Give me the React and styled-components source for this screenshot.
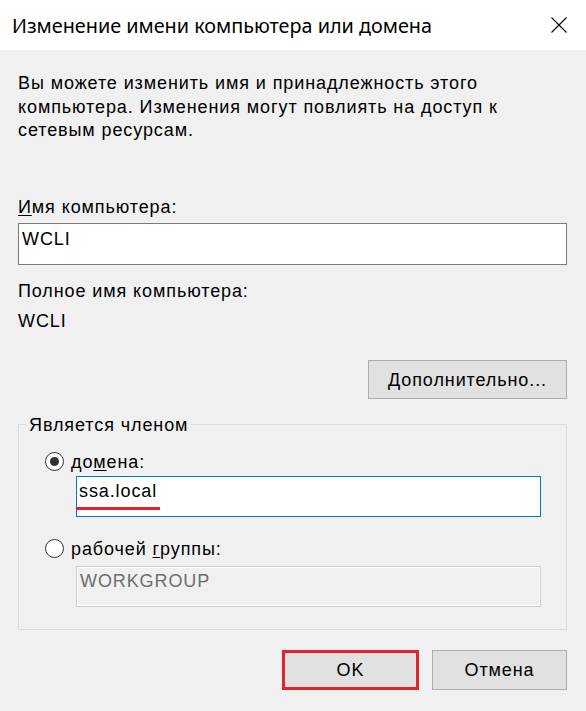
import styled, { createGlobalStyle } from "styled-components"

const GlobalStyle = createGlobalStyle`
    html, body {
        margin: 0;
        padding: 0;
        background: #f0f0f0;
    }
    body {
        font-family: "Liberation Sans", Arial, sans-serif;
        font-size: 18px;
        letter-spacing: 0.9px;
        color: #000;
    }
`

const Dialog = styled.div`
    width: 586px;
    height: 711px;
    background: #f0f0f0;
    display: flex;
    flex-direction: column;
`

const TitleBar = styled.div`
    height: 50px;
    background: #fff;
    display: flex;
    align-items: center;
    justify-content: space-between;
    padding: 0 19px 0 12px;
`

const Title = styled.div`
    font-family: "Noto Sans", "Open Sans", sans-serif;
    font-size: 19.8px;
    letter-spacing: 0;
    color: #000;
`

const Body = styled.div`
    padding: 22px 19px 0 18px;
    display: flex;
    flex-direction: column;
`

const Intro = styled.p`
    margin: 0;
    line-height: 23.5px;
`

const Label = styled.div`
    line-height: 20px;
    margin-top: ${(p) => p.$gap || 0}px;
`

const Key = styled.span`
    text-decoration: underline;
    text-underline-offset: 2px;
`

const TextBox = styled.div`
    position: relative;
    height: ${(p) => p.$h || 42}px;
    box-sizing: border-box;
    background: ${(p) => (p.$disabled ? "#f0f0f0" : "#fff")};
    border: 1px solid ${(p) => (p.$focused ? "#0078d7" : p.$disabled ? "#cccccc" : "#7a7a7a")};
    box-shadow: ${(p) => (p.$disabled ? "inset 0 0 0 1px #fff" : "none")};
    color: ${(p) => (p.$disabled ? "#6d6d6d" : "#000")};
    line-height: 20px;
    padding: ${(p) => p.$pt || 5}px 0 0 ${(p) => p.$pl || 3}px;
    margin: ${(p) => p.$margin || "0"};
`

const Mark = styled.div`
    position: absolute;
    left: -1px;
    top: 30px;
    width: 84px;
    height: 3px;
    background: #e4222b;
`

const Button = styled.div`
    box-sizing: border-box;
    width: ${(p) => p.$w}px;
    height: ${(p) => p.$h || 40}px;
    background: #e1e1e1;
    border: ${(p) => (p.$marked ? "3px solid #e4222b" : "1px solid #adadad")};
    display: flex;
    align-items: center;
    justify-content: center;
    padding-top: 2px;
`

const RightRow = styled.div`
    display: flex;
    justify-content: flex-end;
    gap: 13px;
    margin-top: ${(p) => p.$gap || 0}px;
`

const Group = styled.fieldset`
    margin: 16px 0 0 0;
    padding: 17px 0 22px 0;
    border: 1px solid #dcdcdc;
    min-width: 0;
`

const Legend = styled.legend`
    margin-left: 7px;
    padding: 0 3px;
    line-height: 20px;
`

const RadioRow = styled.label`
    display: flex;
    align-items: center;
    gap: 7px;
    padding-left: 26px;
    line-height: 20px;
    margin-top: ${(p) => p.$gap || 0}px;
`

const RadioDot = styled.span`
    width: 19px;
    height: 19px;
    box-sizing: border-box;
    border-radius: 50%;
    border: 1px solid #333;
    background: #fff;
    display: flex;
    align-items: center;
    justify-content: center;
    margin-top: -1px;

    &::after {
        content: "";
        width: 9px;
        height: 9px;
        border-radius: 50%;
        background: ${(p) => (p.$checked ? "#333" : "transparent")};
    }
`

const CloseIcon = () => (
    <svg width="16" height="16" viewBox="0 0 16 16">
        <path d="M0.5 0.5 L15.5 15.5 M15.5 0.5 L0.5 15.5" stroke="#000" strokeWidth="1.1" fill="none" />
    </svg>
)

const App = () => {
    return (
        <Dialog>
            <GlobalStyle />
            <TitleBar>
                <Title>Изменение имени компьютера или домена</Title>
                <CloseIcon />
            </TitleBar>
            <Body>
                <Intro>
                    Вы можете изменить имя и принадлежность этого<br />
                    компьютера. Изменения могут повлиять на доступ к<br />
                    сетевым ресурсам.
                </Intro>

                <Label $gap={54}><Key>И</Key>мя компьютера:</Label>
                <TextBox $margin="6px 0 0 0">WCLI</TextBox>

                <Label $gap={16}>Полное имя компьютера:</Label>
                <Label $gap={10}>WCLI</Label>

                <RightRow $gap={29}>
                    <Button $w={199} $h={39}><span><Key>Д</Key>ополнительно...</span></Button>
                </RightRow>

                <Group>
                    <Legend>Является членом</Legend>
                    <RadioRow>
                        <RadioDot $checked />
                        <span>до<Key>м</Key>ена:</span>
                    </RadioRow>
                    <TextBox $focused $h={41} $pt={4} $pl={2} $margin="4px 25px 0 57px">
                        ssa.local
                        <Mark />
                    </TextBox>
                    <RadioRow $gap={22}>
                        <RadioDot />
                        <span>рабочей <Key>г</Key>руппы:</span>
                    </RadioRow>
                    <TextBox $disabled $h={41} $pt={4} $pl={3} $margin="7px 25px 0 57px">
                        WORKGROUP
                    </TextBox>
                </Group>

                <RightRow $gap={20}>
                    <Button $w={137} $marked>OK</Button>
                    <Button $w={135}>Отмена</Button>
                </RightRow>
            </Body>
        </Dialog>
    )
}

export default App
